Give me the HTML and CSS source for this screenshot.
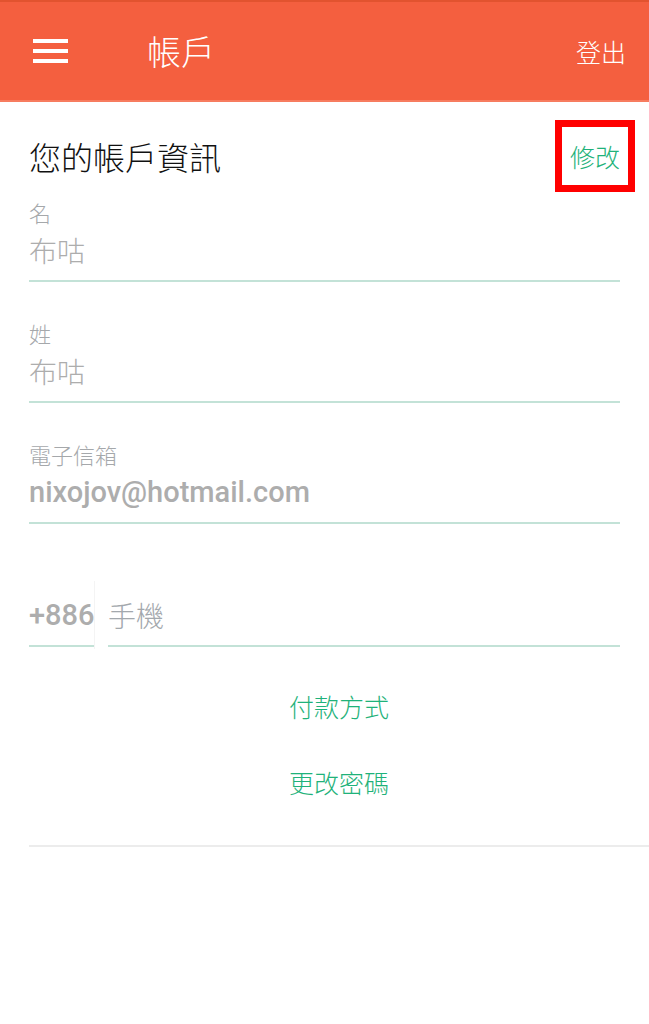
FILE: index.html
```html
<!DOCTYPE html>
<html lang="zh-Hant">

<head>
  <meta charset="UTF-8" />
  <meta name="viewport" content="width=device-width, initial-scale=1.0" />
  <title>帳戶</title>
  <link rel="stylesheet" href="styles.css">
</head>

<body>
  <header class="topbar">
    <span class="menu">
      <span class="bar"></span>
      <span class="bar"></span>
      <span class="bar"></span>
    </span>
    <h1 class="title">帳戶</h1>
    <span class="logout">登出</span>
  </header>

  <main class="account">
    <div class="account-head">
      <h2>您的帳戶資訊</h2>
      <span class="edit">修改</span>
    </div>

    <div class="field field-first">
      <div class="label">名</div>
      <div class="value">布咕</div>
    </div>

    <div class="field">
      <div class="label">姓</div>
      <div class="value">布咕</div>
    </div>

    <div class="field">
      <div class="label">電子信箱</div>
      <div class="value latin">nixojov@hotmail.com</div>
    </div>

    <div class="phone">
      <div class="value latin code">+886</div>
      <div class="value number">手機</div>
    </div>

    <div class="links">
      <a href="#">付款方式</a>
      <a href="#">更改密碼</a>
    </div>

    <hr class="divider">
  </main>
</body>

</html>
```

FILE: styles.css
```css
body {
  margin: 0;
  font-family: "Noto Sans CJK TC", "Noto Sans", sans-serif;
  font-weight: 300;
  background: #fff;
}

.topbar {
  display: flex;
  align-items: center;
  height: 98px;
  padding: 0 23px 0 33px;
  background-color: #f45f3f;
  border-top: 2px solid #e2532f;
  border-bottom: 2px solid #f77c5f;
  color: #fff;
}

.menu {
  display: flex;
  flex-direction: column;
  gap: 6px;
  width: 35px;
}

.bar {
  height: 4px;
  background: #fff;
}

.title {
  margin: 0 0 0 79px;
  font-size: 34px;
  font-weight: 300;
  line-height: 40px;
  flex: 1;
}

.logout {
  font-size: 25px;
}

.account {
  padding: 0 29px;
}

.account-head {
  display: flex;
  align-items: center;
  justify-content: space-between;
  height: 72px;
  margin-top: 18px;
}

.account-head h2 {
  margin: 0;
  font-size: 32px;
  font-weight: 300;
  color: #111;
}

.edit {
  display: flex;
  align-items: center;
  justify-content: center;
  box-sizing: border-box;
  width: 80px;
  height: 72px;
  margin-right: -15px;
  border: 7px solid #ff0000;
  color: #1fb27a;
  font-size: 25px;
}

.field {
  padding-bottom: 10px;
  border-bottom: 2px solid #c3e2d7;
  margin-top: 37px;
}

.field-first {
  margin-top: 6px;
}

.label {
  font-size: 22px;
  line-height: 28px;
  color: #a5a8ab;
  margin-bottom: 4px;
}

.value {
  font-size: 28px;
  line-height: 40px;
  color: #adadad;
}

.latin {
  font-family: Roboto, "Noto Sans CJK TC", sans-serif;
  font-weight: 500;
  font-size: 29px;
}

.phone {
  display: flex;
  gap: 14px;
  margin-top: 71px;
}

.phone .value {
  padding-bottom: 10px;
  border-bottom: 2px solid #c3e2d7;
}

.code {
  width: 65px;
  position: relative;
}

.code::after {
  content: "";
  position: absolute;
  right: -1px;
  top: -14px;
  bottom: -4px;
  width: 1px;
  background: #f4f4f4;
}

.number {
  flex: 1;
  color: #a3a8ad;
}

.links {
  display: flex;
  flex-direction: column;
  align-items: center;
  gap: 36px;
  margin: 39px -29px 0 0;
}

.links a {
  font-size: 25px;
  line-height: 40px;
  color: #1fb27a;
  text-decoration: none;
}

.divider {
  margin: 43px -29px 0 0;
  height: 2px;
  border: 0;
  background: #ececec;
}
```
